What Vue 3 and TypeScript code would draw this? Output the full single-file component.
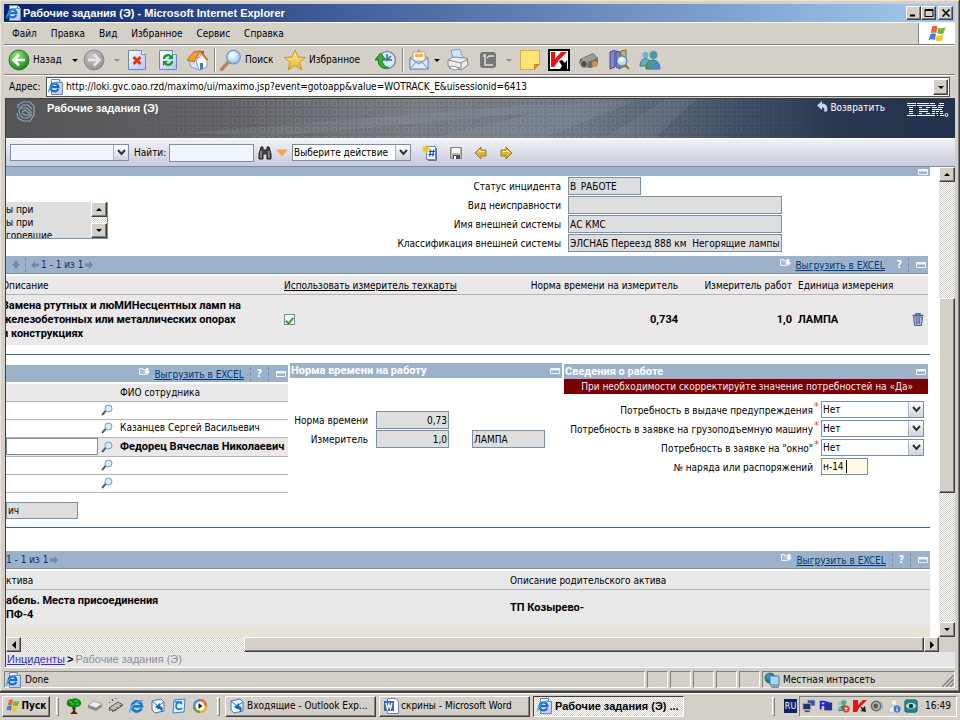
<script setup lang="ts">
import { ref } from 'vue'

interface Field { id: string; label: string; value: string; short?: boolean }
interface Need { id: string; label: string }

const menu = ['Файл', 'Правка', 'Вид', 'Избранное', 'Сервис', 'Справка']
const url = ref('http://loki.gvc.oao.rzd/maximo/ui/maximo.jsp?event=gotoapp&value=WOTRACK_E&uisessionid=6413')
const incident: Field[] = [
  { id: 'status', label: 'Статус инцидента', value: 'В_РАБОТЕ', short: true },
  { id: 'fault', label: 'Вид неисправности', value: '' },
  { id: 'extname', label: 'Имя внешней системы', value: 'АС КМС' },
  { id: 'extclass', label: 'Классификация внешней системы', value: 'ЭЛСНАБ Переезд 888 км  Негорящие лампы' },
]
const staff = ['', 'Казанцев Сергей Васильевич', 'Федорец Вячеслав Николаевич', '', '']
const current = 2
const needs: Need[] = [
  { id: 'warn', label: 'Потребность в выдаче предупреждения' },
  { id: 'crane', label: 'Потребность в заявке на грузоподъемную машину' },
  { id: 'window', label: 'Потребность в заявке на "окно"' },
]
const order = ref('н-14')
const checked = ref(true)
const quick = ['tree', 'drive', 'chip', 'ie', 'outlook', 'mailc', 'media']
const tray = ['net', 'pbe', 'msgx', 'kasp', 'speaker', 'person', 'eye']
</script>

<template>
  <svg class="defs" aria-hidden="true">
    <defs>
      <radialGradient id="gGreen" cx=".4" cy=".3" r=".8"><stop offset="0" stop-color="#a4e58c" /><stop offset=".55" stop-color="#3fae35" /><stop offset="1" stop-color="#147014" /></radialGradient>
      <radialGradient id="gGray" cx=".4" cy=".3" r=".8"><stop offset="0" stop-color="#c8c8c8" /><stop offset="1" stop-color="#8b8b8b" /></radialGradient>
      <linearGradient id="gPage" x1="0" y1="0" x2="1" y2="1"><stop offset="0" stop-color="#fff" /><stop offset="1" stop-color="#a9c4f5" /></linearGradient>
      <linearGradient id="gGold" x1="0" y1="0" x2="0" y2="1"><stop offset="0" stop-color="#fff3a0" /><stop offset="1" stop-color="#e9ac25" /></linearGradient>
      <radialGradient id="gLens" cx=".4" cy=".35" r=".7"><stop offset="0" stop-color="#fff" /><stop offset="1" stop-color="#8fc4ee" /></radialGradient>
      <linearGradient id="gHead" x1="0" y1="0" x2="1" y2="0"><stop offset="0" stop-color="#555556" /><stop offset=".25" stop-color="#606266" /><stop offset=".42" stop-color="#75797f" /><stop offset=".6" stop-color="#6c7784" /><stop offset=".76" stop-color="#415064" /><stop offset=".88" stop-color="#28374f" /><stop offset="1" stop-color="#22324c" /></linearGradient>
      <linearGradient id="gFade" x1="0" y1="0" x2="1" y2="0"><stop offset=".1" stop-color="#000" /><stop offset=".3" stop-color="#fff" /><stop offset=".6" stop-color="#fff" /><stop offset=".88" stop-color="#000" /></linearGradient>
      <mask id="mFade" maskContentUnits="objectBoundingBox"><rect width="1" height="1" fill="url(#gFade)" /></mask>
      <pattern id="pGrid" width="9" height="9" patternUnits="userSpaceOnUse"><rect x="1.5" y="1.5" width="5" height="5" fill="none" stroke="#a5aab0" stroke-opacity=".26" /></pattern>
    </defs>
    <symbol id="i-ie" viewBox="0 0 16 16">
      <path d="M3.500.5h8l3 3v12h-11z" fill="url(#gPage)" stroke="#7386a8" /><path d="M11.500.5v3h3" fill="#fff" stroke="#7386a8" />
      <path d="M10.200 10a4 4 0 1 1 .3-1.800H3.500" fill="none" stroke="#1a6dc6" stroke-width="2.200" /><path d="M.8 13.500C0 9.500 6 3.500 11.500 3.200" fill="none" stroke="#3f9ae8" stroke-width="1.200" />
    </symbol>
    <symbol id="i-ieball" viewBox="0 0 16 16">
      <path d="M12.500 10.500a5 5 0 1 1 .4-2.200H4" fill="none" stroke="#1c78cf" stroke-width="2.800" /><path d="M1 14.500C0 10 7 2.500 14.500 2.500" fill="none" stroke="#58b1ee" stroke-width="1.500" />
    </symbol>
    <symbol id="i-back" viewBox="0 0 22 22"><circle cx="11" cy="11" r="10" fill="url(#gGreen)" stroke="#2e7d26" /><path d="M17 11H6m5-5.500L5.500 11l5.500 5.500" fill="none" stroke="#fff" stroke-width="2.600" /></symbol>
    <symbol id="i-fwd" viewBox="0 0 22 22"><circle cx="11" cy="11" r="10" fill="url(#gGray)" stroke="#888" /><path d="M5 11h11m-5-5.500 5.500 5.500-5.500 5.500" fill="none" stroke="#e8e8e8" stroke-width="2.600" /></symbol>
    <symbol id="i-stop" viewBox="0 0 22 22"><path d="M2.500 1.500h13l4 4v15h-17z" fill="url(#gPage)" stroke="#7187c0" /><path d="M15.500 1.500v4h4" fill="#fff" stroke="#7187c0" /><path d="m7.500 8 7 7m0-7-7 7" stroke="#e9320d" stroke-width="2.800" /></symbol>
    <symbol id="i-refresh" viewBox="0 0 22 22"><path d="M2.500 1.500h13l4 4v15h-17z" fill="url(#gPage)" stroke="#7187c0" /><path d="M15.500 1.500v4h4" fill="#fff" stroke="#7187c0" /><path d="M7 10c0-4 5-5 7-2m1 4c0 4-5 5-7 2" fill="none" stroke="#18952b" stroke-width="2.200" /><path d="M16 5v5h-5zM6 17v-5h5z" fill="#18952b" /></symbol>
    <symbol id="i-home" viewBox="0 0 22 22"><path d="M15 2h3v6h-3z" fill="#c3432e" /><path d="m3 11 5-4 6 3v11l-9-3z" fill="#d8e3f5" stroke="#8ba0c0" /><path d="m10 12 6-7 5 6v7l-8 3z" fill="#fff" stroke="#8ba0c0" /><path d="m1 11 7-8.500L14 2l-6 11z" fill="#f39a36" stroke="#c36c1b" /><path d="m14 2 7.500 9" stroke="#c77a2f" stroke-width="2" /><path d="M14 14h3v6l-3 1z" fill="#4d7ac0" /></symbol>
    <symbol id="i-search" viewBox="0 0 22 22"><path d="m1.500 20.500 7-7.500" stroke="#b98263" stroke-width="3.500" stroke-linecap="round" /><circle cx="13.500" cy="8" r="6.800" fill="url(#gLens)" stroke="#6f9fd0" stroke-width="1.400" /></symbol>
    <symbol id="i-star" viewBox="0 0 22 22"><path d="m11 1 3 7 7.500.5-6 5L18 21l-7-4.500L4 21l2-7.500-5.500-5L8 8z" fill="url(#gGold)" stroke="#d08f1e" /></symbol>
    <symbol id="i-history" viewBox="0 0 22 22"><circle cx="13" cy="11" r="8.500" fill="#d8ebf8" stroke="#7896a8" stroke-width="1.600" /><path d="M13 5v6l4-4M13 11h5" stroke="#3b6994" stroke-width="1.500" fill="none" /><path d="M15 18.500C9 21 3.500 17 4.500 11H1l5.500-7L12 11H8.500c-.5 4 2.500 7 6.500 7.500z" fill="#38ab38" stroke="#167d20" /></symbol>
    <symbol id="i-mail" viewBox="0 0 22 22"><path d="M2 9 11 1l9 8v11H2z" fill="#a5c8f2" stroke="#6a8fc8" /><path d="M5 3h12v9H5z" fill="#fff4dc" stroke="#c8a878" /><path d="M7 5h8v3H7z" fill="#f6b352" /><path d="m2 9 9 6 9-6v11H2z" fill="#dcebfc" stroke="#6a8fc8" /><path d="m2 20 6-7m12 7-6-7" stroke="#6a8fc8" /></symbol>
    <symbol id="i-print" viewBox="0 0 22 22"><path d="m4 1 9-.5 3 9H6z" fill="#cfe3fb" stroke="#7f9dc8" /><path d="m1 11 5-3 14 1 1 7-7 5-13-4z" fill="#ececec" stroke="#888" /><path d="m1 11 13 3 7-4m-7 4v6" fill="none" stroke="#888" /><path d="m5 17 8 2-5 2-6-2z" fill="#fff" stroke="#8796a8" /></symbol>
    <symbol id="i-edit" viewBox="0 0 22 22"><rect x="3" y="3" width="16" height="16" rx="3" fill="#777" /><path d="M7 8V6h2m-1 1v9h8M10 9l2-2h5" stroke="#ddd" stroke-width="1.500" fill="none" /></symbol>
    <symbol id="i-note" viewBox="0 0 22 22"><path d="M1.500 1.500h19v14l-5 5h-14z" fill="#ffe375" stroke="#dcae38" /><path d="M20.500 15.500h-5v5" fill="#d09c34" stroke="#b9852b" /></symbol>
    <symbol id="i-kasp" viewBox="0 0 22 22"><path d="M1 1h20v20H1z" fill="#fff" stroke="#000" stroke-width="2" /><path d="M3 3h4v7l6-7h6l-8 8-5 7H3z" fill="#ee1010" /><path d="m11 12 3-1 3 3 2-3v9h-7l2-3z" fill="#000" /></symbol>
    <symbol id="i-ktray" viewBox="0 0 14 14"><path d="M0 1h5v5l5-5h4L6 9l-2 4H0z" fill="#ee1010" /><path d="m7 7 3 2 2-2 1 6-6-1 2-1z" fill="#222" /></symbol>
    <symbol id="i-cam" viewBox="0 0 22 22"><path d="m2 10 13-6 5 5v6l-7 4-8-1-4-4z" fill="#706d68" /><path d="m3 10 12-5 4 4-9 4z" fill="#a19c91" /><circle cx="6" cy="15" r="3.500" fill="#544f48" stroke="#aaa" /><circle cx="17" cy="15" r="3" fill="#c8964d" /></symbol>
    <symbol id="i-books" viewBox="0 0 22 22"><path d="m2 3 5-2v17l-5 2z" fill="#8a82c8" stroke="#4b4488" /><path d="m8 2 4 1v17l-4-2z" fill="#6c8bd0" stroke="#3d5796" /><path d="m13 2 5-1v16l-5 2z" fill="#c6b27c" stroke="#7d6b3c" /><circle cx="14" cy="12" r="5" fill="url(#gLens)" stroke="#4c79a8" /><path d="m17 16 4 4" stroke="#9c7130" stroke-width="2" /></symbol>
    <symbol id="i-msn" viewBox="0 0 22 22"><circle cx="6.500" cy="6" r="3" fill="#63b7cf" /><path d="M1 17c0-10 11-10 11 0z" fill="#66aebe" stroke="#38788a" /><circle cx="14.500" cy="6" r="4.500" fill="#4f9b9a" stroke="#b3d8e8" /><path d="M7 20c0-12 14-12 14 0z" fill="#4a9d8a" stroke="#2f7074" /><path d="M14 14c4-3 7 2 7 6h-6z" fill="#4c87dd" /></symbol>
    <symbol id="i-flag" viewBox="0 0 20 20"><path d="M4 2c2-2 5-1 6 0L8.500 9C7 8 4 8 2.500 9z" fill="#ef6130" /><path d="M11 3c2 1 5 1 8-1l-2 7c-2 2-5 1-7.500 0z" fill="#6fb936" /><path d="M2.300 10c2-1 4-1 6 0L7 17c-2-2-5-1-7 0z" fill="#3f83df" /><path d="M9.300 11c2 1 5 1 7.500-1L15 17c-2 2-5 1-7.500 0z" fill="#f7c51c" /></symbol>
    <symbol id="i-swirl" viewBox="0 0 22 24"><g fill="none" stroke="#88a8c2" stroke-width="1.200"><path d="M3 8V5l5-3h7l4 4v9l-4 6H8l-5-3-1-5" /><path d="M6 8h6l4 4v4l-4 2H8l-3-3-1-5 4-5h5l4 4M7 12l3-2 4 3v2h-4l-3-2" /></g></symbol>
    <symbol id="i-binoc" viewBox="0 0 14 14"><path d="M3 1h2v3h4V1h2l2 7v5H9V8H5v5H1V8z" fill="#444" stroke="#222" /><path d="M3 5v7M11 5v7" stroke="#bbb" /></symbol>
    <symbol id="i-new" viewBox="0 0 16 16"><path d="M4.500 1.500h9v13h-9z" fill="#f4f8ff" stroke="#6a83bb" /><path d="M14.500 3v12.500H6" fill="none" stroke="#5a73a8" /><path d="M7 6.500h6M6.500 9.500h6M8.700 4.500l-1 7M11.700 4.500l-1 7" stroke="#1452b8" stroke-width="1.200" /><path d="M4 0v8M0 4h8M1.200 1.200l5.600 5.600M6.800 1.200 1.200 6.800" stroke="#f4c51e" stroke-width="1.300" /></symbol>
    <symbol id="i-save" viewBox="0 0 14 14"><path d="M1.500 1.500h11v11h-11z" fill="#b9bba6" stroke="#85877c" /><path d="M3 2h8v5H3z" fill="#f4f4f4" /><path d="M4 9h7v4H4z" fill="#4a4d4c" /><path d="M5 10h2v3H5z" fill="#fff" /></symbol>
    <symbol id="i-prev" viewBox="0 0 14 14"><path d="m1 7 6-6v3h5v6H7v3z" fill="#ddb338" stroke="#9a7720" /><path d="M3.500 6.500 6 4v1.500h5" stroke="#fff0a8" fill="none" /></symbol>
    <symbol id="i-next" viewBox="0 0 14 14"><path d="M13 7 7 1v3H2v6h5v3z" fill="#ddb338" stroke="#9a7720" /><path d="M3 5.500h5V4l2.500 2.500" stroke="#fff0a8" fill="none" /></symbol>
    <symbol id="i-return" viewBox="0 0 11 11"><path d="M0 4.500 5 0v2.500c5 0 6 4 5 8H7C8 8 7 6 5 6.500V9z" fill="#c3d5f6" /></symbol>
    <symbol id="i-glass" viewBox="0 0 12 12"><path d="m1 11 4-4.500" stroke="#59606c" stroke-width="2" /><circle cx="7.500" cy="4.500" r="3.500" fill="#d6edfa" stroke="#7d95ad" /></symbol>
    <symbol id="i-export" viewBox="0 0 12 10"><path d="M1.500 1.500h3v1h3v5h-6z" fill="#a9bdd3" stroke="#eef3f9" /><path d="M8 1v3H6l3.500 4L12 4.500h-1.500V1z" fill="#f4f7fb" /></symbol>
    <symbol id="i-min" viewBox="0 0 10 6"><path d="M.5.5h9v5h-9z" fill="#9bb2ca" stroke="#eef3f9" /><path d="M0 1.500h10" stroke="#eef3f9" stroke-width="2" /></symbol>
    <symbol id="i-down" viewBox="0 0 8 8"><path d="M2.500 0h3v3H8L4 8 0 3h2.500z" fill="#7089a6" /></symbol>
    <symbol id="i-left" viewBox="0 0 8 8"><path d="M0 4 4 0v2.500h4v3H4V8z" fill="#7089a6" /></symbol>
    <symbol id="i-right" viewBox="0 0 8 8"><path d="M8 4 4 0v2.500H0v3h4V8z" fill="#7089a6" /></symbol>
    <symbol id="i-trash" viewBox="0 0 12 13"><path d="M4 2V.5h4V2M.5 2.500h11" fill="none" stroke="#4a6288" stroke-width="1.400" /><path d="M1.500 4h9l-1 8.500h-7z" fill="#a9b8d3" stroke="#4a6288" /><path d="M4.500 5v6M6 5v6M7.500 5v6" stroke="#4a6288" stroke-width=".8" /></symbol>
    <symbol id="i-tree" viewBox="0 0 16 16"><path d="M6 8h4l-1 5 3 3H4l3-3z" fill="#4a2c12" /><path d="M1 4c0-3 4-3 5-3 3-2 8 0 9 3 1 3-2 5-5 5-2 1-4 0-5 0C2 8 0 7 1 4z" fill="#0e8a18" /><path d="M3 4h3M8 3h4M5 6h3m2 0h3" stroke="#1ed02c" stroke-width="1.500" /></symbol>
    <symbol id="i-drive" viewBox="0 0 16 16"><path d="m1 7 6-4 8 3v3l-6 4-8-3z" fill="#8a8a8a" /><path d="m1 7 6-4 8 3-6 4z" fill="#eee" stroke="#888" stroke-width=".6" /></symbol>
    <symbol id="i-chip" viewBox="0 0 16 16"><path d="m1 10 9-6 5 3-9 6z" fill="#bdbdb5" stroke="#555" /><path d="m1 11 1 2m2-1 1 2m2-3 1 2m1-4 1 2m2-4 1 2m-11-4-1-1m4-1-1-2m4 0-1-2" stroke="#444" /></symbol>
    <symbol id="i-outlook" viewBox="0 0 16 16"><path d="m2 3 9-2 3 3v9l-9 2-3-3z" fill="#e9f4ff" stroke="#3d77c2" /><path d="m2 3 6 5 6-4" fill="none" stroke="#3d77c2" /><path d="m5 9 5-4v3c4 1 3 5 1 6 0-3-1-3-3-3z" fill="#1d65c4" /></symbol>
    <symbol id="i-mailc" viewBox="0 0 16 16"><path d="m3 2 11-1-1 13-11 1z" fill="#d8f0ff" stroke="#2f86c9" /><path d="M11 6c-3-3-6-1-6 2 0 4 4 4 6 2M4 4h7" fill="none" stroke="#2272c0" stroke-width="1.600" /></symbol>
    <symbol id="i-media" viewBox="0 0 16 16"><circle cx="8" cy="8" r="7" fill="#4a86d8" /><path d="M8 1a7 7 0 0 1 7 7H8z" fill="#e9622c" /><path d="M15 8a7 7 0 0 1-7 7V8z" fill="#f3b62a" /><path d="M1 8a7 7 0 0 0 7 7V8z" fill="#56a83c" /><circle cx="8" cy="8" r="4.500" fill="#fff" /><path d="m6.500 5 4 3-4 3z" fill="#222" /></symbol>
    <symbol id="i-word" viewBox="0 0 16 16"><path d="M4.500.5h8l3 3v12h-11z" fill="#fff" stroke="#7386a8" /><path d="M1 3h10v10H1z" fill="#3868c0" /><path d="m3 5 1.500 6L6 6l1.500 5L9 5" fill="none" stroke="#fff" stroke-width="1.300" /></symbol>
    <symbol id="i-net" viewBox="0 0 16 16"><path d="M6 1h9v7H6z" fill="#44518e" stroke="#c2c8dc" /><path d="M1 5h9v7H1z" fill="#26326e" stroke="#a8b1cf" /><path d="M3 14h6" stroke="#555" stroke-width="2" /></symbol>
    <symbol id="i-pbe" viewBox="0 0 16 16"><path d="M6 4h9v9H6z" fill="#333a55" /><path d="M2 12V3h4c3 0 3 4 0 4H2m8-4v8h4" fill="none" stroke="#1822e0" stroke-width="2.200" /></symbol>
    <symbol id="i-msgx" viewBox="0 0 16 16"><circle cx="9" cy="4" r="3" fill="#58a68a" /><path d="M3 14C3 5 14 5 14 13z" fill="#3e8b77" /><circle cx="4" cy="5" r="2" fill="#8ec3cc" /><path d="m1 13 3-5 3 4z" fill="#7ab6c6" /><circle cx="11.500" cy="11.500" r="4" fill="#e13a22" /><path d="m10 10 3 3m0-3-3 3" stroke="#fff" stroke-width="1.400" /></symbol>
    <symbol id="i-speaker" viewBox="0 0 16 16"><circle cx="7" cy="8" r="5.500" fill="#aaa" stroke="#666" stroke-width="1.500" /><circle cx="6.500" cy="8" r="2.500" fill="#555" /><path d="M13 3c2 3 2 7 0 10" fill="none" stroke="#9a9ad0" /></symbol>
    <symbol id="i-person" viewBox="0 0 16 16"><circle cx="8" cy="4" r="3.500" fill="#f4f0e0" stroke="#c8c0a0" /><path d="M2 15c0-9 12-9 12 0z" fill="#f0f0f0" stroke="#b8b8b8" /><circle cx="11.500" cy="11.500" r="4" fill="#3b7ee0" /><path d="M11.500 9v1m0 1v3" stroke="#fff" stroke-width="1.500" /></symbol>
    <symbol id="i-eye" viewBox="0 0 16 16"><rect x="1" y="1" width="14" height="14" rx="2" fill="#248b8d" stroke="#125c5e" /><path d="M2 8c3-5 9-5 12 0-3 4-9 4-12 0z" fill="#bde6e0" /><circle cx="8" cy="8" r="2.500" fill="#17383a" /></symbol>
    <symbol id="i-globe" viewBox="0 0 16 16"><circle cx="6" cy="6" r="5.500" fill="#2a7f58" /><path d="M2 3c3-3 6 0 4 3s-4 1-4-3z" fill="#3d8be0" /><path d="M6 4h9v9H6z" fill="#9edbf4" stroke="#4c78b4" /><path d="M7 15h8" stroke="#8a95a8" stroke-width="2" /></symbol>
    <symbol id="i-ibm" viewBox="0 0 42 15">
      <path d="M0 .5h9M10 .5h12M23 .5h5M32 .5h5M0 2.500h9M10 2.500h13M23 2.500h6M31 2.500h6M2 4.500h4M12 4.500h3M19 4.500h4M25 4.500h5M31 4.500h5M2 6.500h4M12 6.500h9M25 6.500h10M2 8.500h4M12 8.500h9M25 8.500h3M29 8.500h3M33 8.500h3M2 10.500h4M12 10.500h3M19 10.500h4M25 10.500h3M29 10.500h2M33 10.500h3M0 12.500h9M10 12.500h13M23 12.500h5M30 12.500h1M33 12.500h4" stroke="#f4f7fb" /><circle cx="39.500" cy="12" r="1.500" fill="none" stroke="#fff" />
    </symbol>
  </svg>

  <div class="desktop">
    <main class="window">
      <header class="titlebar">
        <svg class="i16"><use href="#i-ie" /></svg>
        <h1>Рабочие задания (Э) - Microsoft Internet Explorer</h1>
        <button class="raised cap" aria-label="Свернуть"><svg viewBox="0 0 10 8"><path d="M1 6.500h5" stroke="#000" stroke-width="2" /></svg></button>
        <button class="raised cap" aria-label="Развернуть"><svg viewBox="0 0 10 8"><path d="M1 .5h8v7H1zM1 1.500h8" fill="none" stroke="#000" /></svg></button>
        <button class="raised cap close" aria-label="Закрыть"><svg viewBox="0 0 10 8"><path d="m1.500.5 7 7m0-7-7 7" stroke="#000" stroke-width="1.600" /></svg></button>
      </header>

      <nav class="menubar">
        <button v-for="m in menu" :key="m">{{ m }}</button>
        <span class="brand"><svg><use href="#i-flag" /></svg></span>
      </nav>

      <div class="toolbar">
        <button><svg class="i22"><use href="#i-back" /></svg>Назад</button>
        <button class="dd" aria-label="Список назад"><i class="tri"></i></button>
        <button aria-label="Вперед"><svg class="i22"><use href="#i-fwd" /></svg></button>
        <button class="dd" aria-label="Список вперед"><i class="tri dim"></i></button>
        <button aria-label="Остановить"><svg class="i22"><use href="#i-stop" /></svg></button>
        <button class="mid" aria-label="Обновить"><svg class="i22"><use href="#i-refresh" /></svg></button>
        <button aria-label="Домой"><svg class="i22"><use href="#i-home" /></svg></button>
        <span class="vsep"></span>
        <button><svg class="i22"><use href="#i-search" /></svg>Поиск</button>
        <button><svg class="i22"><use href="#i-star" /></svg>Избранное</button>
        <button aria-label="Журнал"><svg class="i22"><use href="#i-history" /></svg></button>
        <span class="vsep"></span>
        <button aria-label="Почта"><svg class="i22"><use href="#i-mail" /></svg></button>
        <button class="dd" aria-label="Список почты"><i class="tri"></i></button>
        <button class="mid" aria-label="Печать"><svg class="i22"><use href="#i-print" /></svg></button>
        <button class="mid" aria-label="Правка"><svg class="i22"><use href="#i-edit" /></svg></button>
        <button class="dd" aria-label="Список правки"><i class="tri dim"></i></button>
        <button class="mid" aria-label="Заметка"><svg class="i22"><use href="#i-note" /></svg></button>
        <button class="mid" aria-label="Антивирус"><svg class="i22"><use href="#i-kasp" /></svg></button>
        <button class="mid" aria-label="Камера"><svg class="i22"><use href="#i-cam" /></svg></button>
        <button class="mid" aria-label="Справочники"><svg class="i22"><use href="#i-books" /></svg></button>
        <button class="mid" aria-label="Messenger"><svg class="i22"><use href="#i-msn" /></svg></button>
      </div>

      <div class="address">
        <label for="url">Адрес:</label>
        <div class="urlbox">
          <svg class="i16"><use href="#i-ie" /></svg>
          <input id="url" v-model="url" type="text" spellcheck="false">
          <button class="raised arrow" aria-label="Список адресов"><i class="tri"></i></button>
        </div>
      </div>

      <section class="page">
        <header class="apphead">
          <svg class="art" aria-hidden="true">
            <rect width="100%" height="100%" fill="url(#gHead)" />
            <g fill="#aeb8c4" opacity=".12"><path d="M180 34 520 6h90L260 38zM430 38l150-36h50l-90 36zM600 38l60-38h30l-40 38z" /></g>
            <rect width="100%" height="100%" fill="url(#pGrid)" mask="url(#mFade)" />
          </svg>
          <svg class="swirl"><use href="#i-swirl" /></svg>
          <h2>Рабочие задания (Э)</h2>
          <a href="#return"><svg><use href="#i-return" /></svg>Возвратить</a>
          <svg class="ibm" role="img" aria-label="IBM"><use href="#i-ibm" /></svg>
        </header>

        <div class="apptools">
          <span class="pick query"><select aria-label="Запрос"><option></option></select><i class="chev"><svg viewBox="0 0 9 7"><path d="m1 1 3.500 4L8 1" /></svg></i></span>
          <label for="find">Найти:</label>
          <input id="find" class="box find" type="text">
          <button aria-label="Искать"><svg class="i14"><use href="#i-binoc" /></svg></button>
          <button class="orange" aria-label="Параметры поиска"><svg viewBox="0 0 12 8"><path d="M0 .5h12l-6 7z" fill="#f4a845" /></svg></button>
          <span class="pick action"><select aria-label="Действие"><option>Выберите действие</option></select><i class="chev"><svg viewBox="0 0 9 7"><path d="m1 1 3.500 4L8 1" /></svg></i></span>
          <button class="wide" aria-label="Создать"><svg class="i16"><use href="#i-new" /></svg></button>
          <button class="wide" aria-label="Сохранить"><svg class="i14"><use href="#i-save" /></svg></button>
          <button class="wide" aria-label="Предыдущая"><svg class="i14"><use href="#i-prev" /></svg></button>
          <button class="wide" aria-label="Следующая"><svg class="i14"><use href="#i-next" /></svg></button>
        </div>

        <div class="viewport">
          <div class="content">
            <div class="bar top"><svg class="min"><use href="#i-min" /></svg></div>
            <div class="incident">
              <div class="memo">
                <p>ы при<br>ы при<br>горевшие</p>
                <div class="vscroll small">
                  <button class="raised" aria-label="Вверх"><i class="tri up"></i></button><span></span><button class="raised" aria-label="Вниз"><i class="tri"></i></button>
                </div>
              </div>
              <div class="fields">
                <template v-for="f in incident" :key="f.id">
                  <label :for="f.id">{{ f.label }}</label>
                  <input :id="f.id" class="box ro" :class="{ short: f.short }" type="text" readonly :value="f.value">
                </template>
              </div>
            </div>

            <div class="bar grid1">
              <svg class="nav"><use href="#i-down" /></svg><i class="dots"></i><svg class="nav"><use href="#i-left" /></svg><span class="count">1 - 1 из 1</span><svg class="nav"><use href="#i-right" /></svg>
              <span class="fill"></span>
              <svg class="exp"><use href="#i-export" /></svg><a href="#excel1">Выгрузить в EXCEL</a><b class="nodots">?</b><i class="dots"></i><svg class="min"><use href="#i-min" /></svg>
            </div>
            <table class="works">
              <colgroup><col class="c1"><col class="c2"><col class="c3"><col class="c4"><col></colgroup>
              <thead><tr><th><span class="cut">Описание</span></th><th><u>Использовать измеритель техкарты</u></th><th class="r">Норма времени на измеритель</th><th class="r">Измеритель работ</th><th class="unit">Единица измерения</th></tr></thead>
              <tbody><tr>
                <td><span class="cut">Замена ртутных и люМИНесцентных ламп на<br>железобетонных или металлических опорах<br>и конструкциях</span></td>
                <td><input v-model="checked" type="checkbox" aria-label="Использовать измеритель техкарты"></td>
                <td class="r">0,734</td><td class="r">1,0</td>
                <td class="unit"><div>ЛАМПА<button aria-label="Удалить"><svg><use href="#i-trash" /></svg></button></div></td>
              </tr></tbody>
            </table>
            <hr>

            <div class="panels">
              <section class="crew">
                <div class="bar"><span class="fill"></span><svg class="exp"><use href="#i-export" /></svg><a href="#excel2">Выгрузить в EXCEL</a><i class="dots"></i><b>?</b><i class="dots"></i><svg class="min"><use href="#i-min" /></svg></div>
                <table>
                  <thead><tr><th class="in"></th><th class="lens"></th><th>ФИО сотрудника</th></tr></thead>
                  <tbody>
                    <tr v-for="(p, n) in staff" :key="n" :class="{ current: n === current }">
                      <td class="in"><input v-if="n === current" class="box" type="text" aria-label="Код сотрудника"></td>
                      <td class="lens"><button aria-label="Выбрать"><svg><use href="#i-glass" /></svg></button></td>
                      <td>{{ p }}</td>
                    </tr>
                  </tbody>
                </table>
                <input class="box ro tail" type="text" readonly value="ич" aria-label="Исполнитель">
              </section>

              <section class="norm">
                <div class="bar"><h3>Норма времени на работу</h3><svg class="min"><use href="#i-min" /></svg></div>
                <div class="normgrid">
                  <label for="norm">Норма времени</label><input id="norm" class="box ro r" type="text" readonly value="0,73"><span></span>
                  <label for="meas">Измеритель</label><input id="meas" class="box ro r" type="text" readonly value="1,0"><input class="box ro" type="text" readonly value="ЛАМПА" aria-label="Единица">
                </div>
              </section>

              <section class="info">
                <div class="bar"><h3>Сведения о работе</h3><svg class="min"><use href="#i-min" /></svg></div>
                <p class="alert">При необходимости скорректируйте значение потребностей на «Да»</p>
                <div class="needs">
                  <template v-for="n in needs" :key="n.id">
                    <label :for="n.id">{{ n.label }}</label><em>*</em>
                    <span class="pick"><select :id="n.id"><option>Нет</option><option>Да</option></select><i class="chev"><svg viewBox="0 0 9 7"><path d="m1 1 3.500 4L8 1" /></svg></i></span>
                  </template>
                  <label for="order">№ наряда или распоряжений</label><em></em>
                  <span class="box order"><input id="order" v-model="order" type="text" size="3"></span>
                </div>
              </section>
            </div>
            <hr>

            <div class="bar grid2">
              <span class="count">1 - 1 из 1</span><svg class="nav"><use href="#i-right" /></svg>
              <span class="fill"></span>
              <svg class="exp"><use href="#i-export" /></svg><a href="#excel3">Выгрузить в EXCEL</a><i class="dots"></i><b>?</b><i class="dots"></i><svg class="min"><use href="#i-min" /></svg>
            </div>
            <table class="assets">
              <thead><tr><th>ктива</th><th>Описание родительского актива</th></tr></thead>
              <tbody><tr><td>абель. Места присоединения<br>ПФ-4</td><td>ТП Козырево-</td></tr></tbody>
            </table>
          </div>
          <div class="vscroll main">
            <button class="raised" aria-label="Вверх"><i class="tri up"></i></button><span class="before"></span><span class="raised thumb"></span><span class="after"></span><button class="raised" aria-label="Вниз"><i class="tri"></i></button>
          </div>
          <div class="hscroll">
            <button class="raised" aria-label="Влево"><i class="tri lf"></i></button><span class="before"></span><span class="raised thumb"></span><button class="raised" aria-label="Вправо"><i class="tri rt"></i></button>
          </div>
          <span class="corner"></span>
        </div>

        <nav class="crumbs"><a href="#incidents">Инциденты</a><b>&gt;</b><span>Рабочие задания (Э)</span></nav>
      </section>

      <footer class="status">
        <div class="cell grow"><svg class="i16"><use href="#i-ie" /></svg>Done</div>
        <div v-for="n in 5" :key="n" class="cell"></div>
        <div class="cell zone"><svg class="i16"><use href="#i-globe" /></svg>Местная интрасеть
          <svg class="grip" viewBox="0 0 12 12"><path d="M0 12 12 0M4 12l8-8M8 12l4-4" stroke="#808080" stroke-width="1.500" /></svg></div>
      </footer>
    </main>

    <footer class="taskbar">
      <button class="raised start"><svg class="i14"><use href="#i-flag" /></svg>Пуск</button>
      <i class="tsep"></i>
      <div class="quick"><button v-for="q in quick" :key="q" :aria-label="q"><svg class="i16"><use :href="q === 'ie' ? '#i-ieball' : '#i-' + q" /></svg></button></div>
      <i class="tsep"></i>
      <div class="tasks">
        <button class="raised"><svg class="i16"><use href="#i-outlook" /></svg>Входящие - Outlook Exp...</button>
        <button class="raised"><svg class="i16"><use href="#i-word" /></svg>скрины - Microsoft Word</button>
        <button class="active"><svg class="i16"><use href="#i-ie" /></svg>Рабочие задания (Э) ...</button>
      </div>
      <span class="fill"></span>
      <i class="tsep"></i>
      <span class="lang">RU</span>
      <div class="tray"><svg v-for="t in tray" :key="t" class="i14"><use :href="t === 'kasp' ? '#i-ktray' : '#i-' + t" /></svg><time>16:49</time></div>
    </footer>
  </div>
</template>

<style>
body { margin: 0; background: #d4d0c8; }
</style>

<style scoped>
* { box-sizing: border-box; }
svg { flex: none; display: block; }
button { font: inherit; color: inherit; background: none; border: 0; padding: 0; margin: 0; display: flex; align-items: center; white-space: nowrap; }
input, select { font: inherit; color: inherit; min-width: 0; margin: 0; outline: 0; border-radius: 0; }
h1, h2, h3, p { margin: 0; font-size: inherit; }
.defs { position: absolute; width: 0; height: 0; }
.i14 { width: 14px; height: 14px; }
.i16 { width: 16px; height: 16px; }
.i22 { width: 22px; height: 22px; }
.fill { flex: 1; }
.desktop { min-height: 100vh; display: flex; flex-direction: column; background: #d4d0c8; font: 10px/14px "DejaVu Sans Condensed", "Liberation Sans", sans-serif; color: #000; overflow: hidden; }
.raised { background: #d4d0c8; border: 1px solid; border-color: #fff #404040 #404040 #fff; box-shadow: inset -1px -1px #808080; justify-content: center; }
.tri { border: 3px solid transparent; border-top: 3px solid #000; border-bottom: 0; }
.tri.up { border-top: 0; border-bottom: 3px solid #000; }
.tri.lf { border: 4px solid transparent; border-right: 4px solid #000; border-left: 0; }
.tri.rt { border: 4px solid transparent; border-left: 4px solid #000; border-right: 0; }
.tri.dim { border-top-color: #909090; }

.window { flex: 1; display: flex; flex-direction: column; padding: 4px 4px 0; border-right: 1px solid #404040; border-bottom: 2px solid #404040; box-shadow: inset 1px 1px #e8e4dc, inset -1px -1px #808080; min-height: 0; }
.titlebar { height: 18px; display: flex; align-items: center; padding: 0 2px; background: linear-gradient(90deg, #0a246a, #a6caf0); color: #fff; }
.titlebar h1 { flex: 1; margin-left: 1px; font: bold 11px/14px "Liberation Sans", sans-serif; white-space: nowrap; }
.cap { width: 15px; height: 14px; }
.cap svg { width: 10px; height: 8px; }
.close { margin-left: 2px; }
.menubar { height: 23px; display: flex; border-top: 1px solid #fff; border-bottom: 1px solid #808080; padding-left: 1px; }
.menubar button { padding: 0 7px; }
.brand { margin-left: auto; width: 37px; background: #fff; border-left: 1px solid #808080; display: flex; align-items: center; justify-content: center; }
.brand svg { width: 19px; height: 18px; }
.toolbar { height: 30px; border-top: 1px solid #fff; border-bottom: 1px solid #808080; padding-left: 4px; display: grid; grid-template-columns: 59px 16px 24px 19px 24px 36px 24px 10px 64px 90px 24px 10px 24px 10px 32px 28px 14px 28px 30px 30px 29px 34px; }
.toolbar button { gap: 3px; }
.toolbar .dd, .toolbar .mid { justify-content: center; }
.vsep { width: 2px; margin: 2px 4px; border-left: 1px solid #808080; border-right: 1px solid #fff; }
.address { height: 23px; border-top: 1px solid #fff; display: grid; grid-template-columns: 37px 1fr; align-items: center; padding: 0 5px; }
.urlbox { height: 20px; display: flex; align-items: center; gap: 2px; background: #fff; border: 1px solid #505050; padding: 1px; }
.urlbox input { flex: 1; border: 0; padding: 0; background: none; }
.urlbox .arrow { width: 15px; height: 16px; }

.page { flex: 1; display: flex; flex-direction: column; margin-left: 1px; border-left: 1px solid #404040; border-top: 1px solid #404040; background: #fff; min-height: 0; }
.apphead { height: 39px; display: grid; grid-template-columns: 9px 32px 1fr auto 22px 42px 6px; align-items: start; color: #fff; overflow: hidden; }
.art { grid-area: 1 / 1 / 2 / 8; width: 100%; height: 39px; }
.swirl { grid-area: 1 / 2; width: 22px; height: 24px; margin-top: 1px; }
.apphead h2 { grid-area: 1 / 3; margin-top: 2px; font: bold 11px/14px "Liberation Sans", sans-serif; }
.apphead a { grid-area: 1 / 4; display: flex; gap: 2px; color: #fff; text-decoration: none; margin-top: 2px; }
.apphead a svg { width: 11px; height: 11px; }
.ibm { grid-area: 1 / 6; width: 42px; height: 15px; margin-top: 4px; }
.apptools { height: 29px; display: flex; align-items: center; padding: 0 4px; background: linear-gradient(#f2f2f7, #c8cbdb); border-top: 1px solid #fff; border-bottom: 1px solid #838b9b; }
.apptools label { width: 31px; margin: 0 4px 0 5px; }
.box { border: 1px solid #7a8fa8; background: #fff; height: 18px; padding: 0 1px; }
.ro { background: #dedede; }
.find { width: 85px; background: #f1f6fc; }
.apptools button { margin-left: 4px; }
.orange svg { width: 12px; height: 8px; }
.apptools .wide { margin-left: 11px; }
.pick { display: grid; border: 1px solid #7a8fa8; background: #fff; height: 17px; align-items: center; }
.pick select { grid-area: 1 / 1; appearance: none; border: 0; background: none; width: 100%; padding: 0 15px 0 1px; }
.chev { grid-area: 1 / 1; justify-self: end; width: 15px; height: 15px; display: flex; align-items: center; justify-content: center; background: linear-gradient(#fff, #ccd3dc); border-left: 1px solid #a9b4c2; pointer-events: none; }
.chev svg { width: 9px; height: 7px; }
.chev path { fill: none; stroke: #333; stroke-width: 2; }
.query { width: 119px; }
.query select { background: #f1f6fc; }
.action { width: 119px; margin-left: 4px; }

.viewport { flex: 1; display: grid; grid-template-columns: minmax(0, 1fr) 16px; grid-template-rows: minmax(0, 1fr) 15px; min-height: 0; }
.content { overflow: hidden; background: #fff; display: flex; flex-direction: column; }
.bar { height: 18px; flex: none; background: #9bb2ca; color: #10305c; display: flex; align-items: center; padding: 0 2px 0 6px; }
.bar h3 { flex: 1; color: #fff; font: bold 11px/14px Roboto, sans-serif; }
.bar a { color: #003a78; align-self: flex-end; white-space: nowrap; }
.bar b { color: #fff; padding: 0 6px; }
.min { width: 10px; height: 6px; }
.exp { width: 12px; height: 10px; margin: 0 4px 4px 0; }
.nav { width: 8px; height: 8px; }
.dots { width: 0; height: 14px; border-left: 1px dashed #6e8db1; margin: 0 5px; }
.bar a + .dots { margin: 0; margin-left: 6px; }
.bar .nodots { margin-left: 6px; }
.bar b + .dots { margin: 0 7px 0 0; }
.count { color: #10305c; margin: 0 2px; white-space: nowrap; }
.top { height: 9px; justify-content: flex-end; margin-right: 9px; }
.incident { height: 80px; flex: none; display: flex; align-items: flex-start; }
.memo { margin-top: 26px; width: 102px; height: 37px; overflow: hidden; display: flex; background: #dedede; border-bottom: 1px solid #7a8fa8; border-right: 1px solid #7a8fa8; }
.memo p { flex: 1; line-height: 13px; padding-top: 1px; }
.vscroll, .hscroll { display: flex; background: repeating-conic-gradient(#fff 0 25%, #d4d0c8 0 50%) 0 0 / 2px 2px; }
.vscroll { flex-direction: column; width: 16px; }
.vscroll button { height: 15px; flex: none; }
.small span { flex: 1; }
.main .before { flex: 116; }
.main .thumb { flex: 194; }
.main .after { flex: 129; }
.hscroll button { width: 15px; }
.hscroll .before { flex: 223; }
.hscroll .thumb { flex: 679; }
.corner { background: #d4d0c8; }
.fields { flex: 1; display: grid; grid-template-columns: 1fr 371px; column-gap: 7px; row-gap: 1px; padding-top: 1px; align-items: center; }
.fields label { text-align: right; padding-top: 2px; }
.fields .box { width: 214px; }
.fields .short { width: 73px; }
table { border-collapse: collapse; table-layout: fixed; }
th { font-weight: normal; text-align: left; padding: 0; white-space: nowrap; }
td { padding: 0; }
.r { text-align: right; }
.grid1 { margin-right: 11px; border-bottom: 1px solid #7d92aa; }
.works { width: calc(100% - 11px); margin-top: 2px; background: #eae8e9; }
.c1 { width: 278px; } .c2 { width: 160px; } .c3 { width: 234px; } .c4 { width: 114px; }
.works th { height: 18px; padding-top: 2px; border-bottom: 1px solid #b4b4b4; }
.works td { height: 51px; font: bold 11px/14px Roboto, sans-serif; }
.works .unit { padding-left: 6px; }
.works .unit div { display: flex; justify-content: space-between; align-items: center; padding-right: 4px; }
.works .unit svg { width: 12px; height: 13px; }
.cut { display: block; margin-left: -4px; }
input[type="checkbox"] { appearance: none; width: 11px; height: 11px; border: 1px solid #6d8fa8; background: #fff; display: grid; place-items: center; }
input[type="checkbox"]:checked::before { content: ""; width: 3px; height: 6px; border: solid #3c9a2c; border-width: 0 2px 2px 0; transform: rotate(40deg); }
hr { flex: none; width: calc(100% - 9px); margin: 9px 0 8px; border: 0; border-top: 1px solid #3d6580; }
.panels { display: grid; grid-template-columns: minmax(0, 282fr) minmax(0, 272fr) minmax(0, 364fr); column-gap: 2px; margin-right: 11px; flex: none; height: 155px; }
.crew { padding-top: 2px; }
.crew .bar { height: 17px; }
.crew table { width: 100%; margin-top: 2px; }
.crew th { height: 17px; background: #eae8e9; padding-top: 2px; }
.crew tr { border-bottom: 1px solid #b4b4b4; }
.crew td { height: 18px; white-space: nowrap; }
.crew .current td { background: #eae8e9; font: bold 11px/14px Roboto, sans-serif; height: 19px; }
.crew .in { width: 92px; }
.crew .in .box { width: 100%; display: block; height: 17px; }
.crew .lens { width: 22px; }
.crew .lens button { padding-left: 3px; }
.crew .lens svg { width: 12px; height: 12px; }
.tail { display: block; width: 72px; height: 17px; margin-top: 9px; }
.norm .bar, .info .bar { height: 15px; padding: 0 2px 0 1px; }
.normgrid { display: grid; grid-template-columns: 78px 73px 73px; column-gap: 8px; row-gap: 1px; padding-top: 33px; align-items: center; }
.normgrid label { text-align: right; padding-top: 2px; white-space: nowrap; }
.normgrid input:last-child { margin-left: 15px; }
.normgrid .box { width: 73px; }
.info { padding-top: 1px; }
.alert { height: 15px; line-height: 15px; background: #780004; color: #f4e8e8; text-align: right; padding-right: 15px; white-space: nowrap; }
.needs { display: grid; grid-template-columns: 1fr 6px 103px; column-gap: 1px; row-gap: 2px; padding: 7px 4px 0 0; align-items: center; }
.needs label { text-align: right; padding-top: 2px; white-space: nowrap; }
.needs em { font-style: normal; font-size: 11px; color: #e05020; align-self: start; line-height: 12px; }
.order { width: 47px; height: 17px; background: #fffbe4; display: flex; align-items: center; }
.order input { width: 24px; height: 13px; border: 0; border-right: 1px solid #000; padding: 0; background: none; }
.grid2 { margin-right: 9px; margin-top: 15px; padding-left: 0; border-bottom: 1px solid #7d92aa; }
.grid2 .count { margin-left: 0; }
.assets { width: calc(100% - 9px); margin-top: 2px; background: #e9e8e9; border-bottom: 10px solid #e6e2d8; }
.assets th { height: 18px; padding-top: 2px; border-bottom: 1px solid #b4b4b4; }
.assets th:first-child { width: 504px; }
.assets td { height: 43px; font: bold 11px/14px Roboto, sans-serif; }
.crumbs { height: 15px; background: #e5e5e5; display: flex; gap: 2px; padding-left: 1px; color: #909090; font-size: 11px; font-family: "Liberation Sans", sans-serif; }
.crumbs a { color: #3333c0; }
.crumbs b { color: #000; }
.status { height: 24px; display: flex; gap: 2px; padding: 3px 0 3px; border-top: 1px solid #fff; }
.cell { width: 21px; border: 1px solid; border-color: #808080 #fff #fff #808080; display: flex; align-items: center; gap: 3px; }
.cell.grow { flex: 1; padding-left: 1px; }
.cell.zone { width: 193px; padding-left: 1px; }
.grip { width: 12px; height: 12px; margin-left: auto; align-self: flex-end; }

.taskbar { height: 27px; flex: none; display: flex; align-items: center; padding: 0 3px 2px 2px; border-top: 1px solid #fff; }
.start { width: 48px; height: 21px; gap: 2px; font-weight: bold; }
.tsep { width: 3px; height: 19px; border: 1px solid; border-color: #fff #808080 #808080 #fff; margin: 0 6px; }
.quick { display: flex; gap: 5px; padding: 0 5px 0 1px; }
.quick + .tsep { margin-left: 4px; margin-right: 5px; }
.tasks { display: flex; gap: 3px; }
.tasks button { width: 151px; height: 21px; padding: 0 3px; gap: 2px; justify-content: flex-start; overflow: hidden; }
.tasks .active { font: bold 11px/14px "Liberation Sans", sans-serif; border: 1px solid; border-color: #404040 #fff #fff #404040; background: repeating-conic-gradient(#fff 0 25%, #d4d0c8 0 50%) 0 0 / 2px 2px; }
.lang { background: #0a246a; color: #fff; width: 13px; height: 14px; text-align: center; font-size: 9px; margin: 0 2px 0 3px; }
.tray { height: 21px; display: flex; align-items: center; gap: 3px; padding: 0 5px 0 2px; border: 1px solid; border-color: #808080 #fff #fff #808080; }
.tray time { margin-left: 4px; }
</style>
